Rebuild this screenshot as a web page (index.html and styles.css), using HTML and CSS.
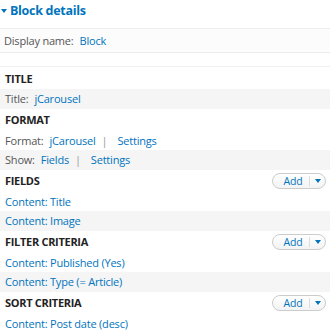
FILE: index.html
```html
<!DOCTYPE html>
<html>
<head>
<meta charset="utf-8">
<link rel="stylesheet" href="styles.css">
</head>
<body>
<div class="panel">
  <div class="panel-title"><span class="caret"></span>Block details</div>
  <div class="display-name"><span class="label">Display name:</span><a class="link">Block</a></div>
  <div class="columns">
    <div class="bucket">
      <div class="bucket-head"><span class="bucket-title">TITLE</span></div>
      <div class="row even"><span class="label">Title:</span><a class="link">jCarousel</a></div>
    </div>
    <div class="bucket">
      <div class="bucket-head"><span class="bucket-title">FORMAT</span></div>
      <div class="row"><span class="label">Format:</span><a class="link">jCarousel</a><span class="sep">|</span><a class="link">Settings</a></div>
      <div class="row even"><span class="label">Show:</span><a class="link">Fields</a><span class="sep">|</span><a class="link">Settings</a></div>
    </div>
    <div class="bucket">
      <div class="bucket-head"><span class="bucket-title">FIELDS</span><span class="add-btn"><span class="add">Add</span><span class="drop"></span></span></div>
      <div class="row"><a class="link">Content: Title</a></div>
      <div class="row even"><a class="link">Content: Image</a></div>
    </div>
    <div class="bucket">
      <div class="bucket-head"><span class="bucket-title">FILTER CRITERIA</span><span class="add-btn"><span class="add">Add</span><span class="drop"></span></span></div>
      <div class="row"><a class="link">Content: Published (Yes)</a></div>
      <div class="row even"><a class="link">Content: Type (= Article)</a></div>
    </div>
    <div class="bucket">
      <div class="bucket-head"><span class="bucket-title">SORT CRITERIA</span><span class="add-btn"><span class="add">Add</span><span class="drop"></span></span></div>
      <div class="row"><a class="link">Content: Post date (desc)</a></div>
    </div>
  </div>
</div>
</body>
</html>
```

FILE: styles.css
```css
html, body {
  margin: 0;
  padding: 0;
  background: #fff;
}
body {
  font-family: "Open Sans", "Liberation Sans", sans-serif;
  font-size: 11px;
  letter-spacing: -0.2px;
  color: #555;
  overflow: hidden;
}
.panel-title {
  height: 28px;
  display: flex;
  align-items: center;
  padding-left: 1px;
  font-size: 12.5px;
  letter-spacing: -0.3px;
  font-weight: bold;
  color: #0074bd;
  box-sizing: border-box;
  padding-bottom: 8px;
}
.caret {
  width: 0;
  height: 0;
  border-left: 3px solid transparent;
  border-right: 3px solid transparent;
  border-top: 4px solid #0074bd;
  margin-right: 3px;
  margin-top: 2px;
}
.display-name {
  height: 25px;
  box-sizing: border-box;
  border-top: 1px solid #ececec;
  border-bottom: 1px solid #ececec;
  background: #fcfcfc;
  display: flex;
  align-items: center;
  padding-left: 4px;
  gap: 6px;
}
.columns {
  margin-top: 13px;
  border-top: 1px solid #f0f0f0;
}
.bucket-head {
  height: 22px;
  display: flex;
  align-items: center;
  justify-content: space-between;
  padding: 0 4px 0 5px;
}
.bucket-title {
  font-weight: bold;
  color: #222;
  font-size: 11px;
  letter-spacing: -0.3px;
}
.row {
  height: 19.5px;
  display: flex;
  align-items: center;
  padding-left: 5px;
  gap: 6px;
}
.row.even {
  background: #f5f5f5;
}
.label {
  color: #555;
}
.link {
  color: #0074bd;
}
.sep {
  color: #999;
  margin: 0 4px 0 0;
}
.add-btn {
  display: flex;
  align-items: center;
  width: 54px;
  height: 16px;
  box-sizing: border-box;
  border: 1px solid #ccc;
  border-radius: 9px;
  background: linear-gradient(#fff, #f3f3f3);
}
.add {
  flex: 1;
  text-align: center;
  color: #0074bd;
  font-size: 10.5px;
  padding-left: 4px;
  border-right: 1px solid #ddd;
  height: 10px;
  line-height: 10px;
}
.drop {
  width: 15px;
  display: flex;
  justify-content: center;
}
.drop::before {
  content: "";
  border-left: 3px solid transparent;
  border-right: 3px solid transparent;
  border-top: 4px solid #0074bd;
}
```
